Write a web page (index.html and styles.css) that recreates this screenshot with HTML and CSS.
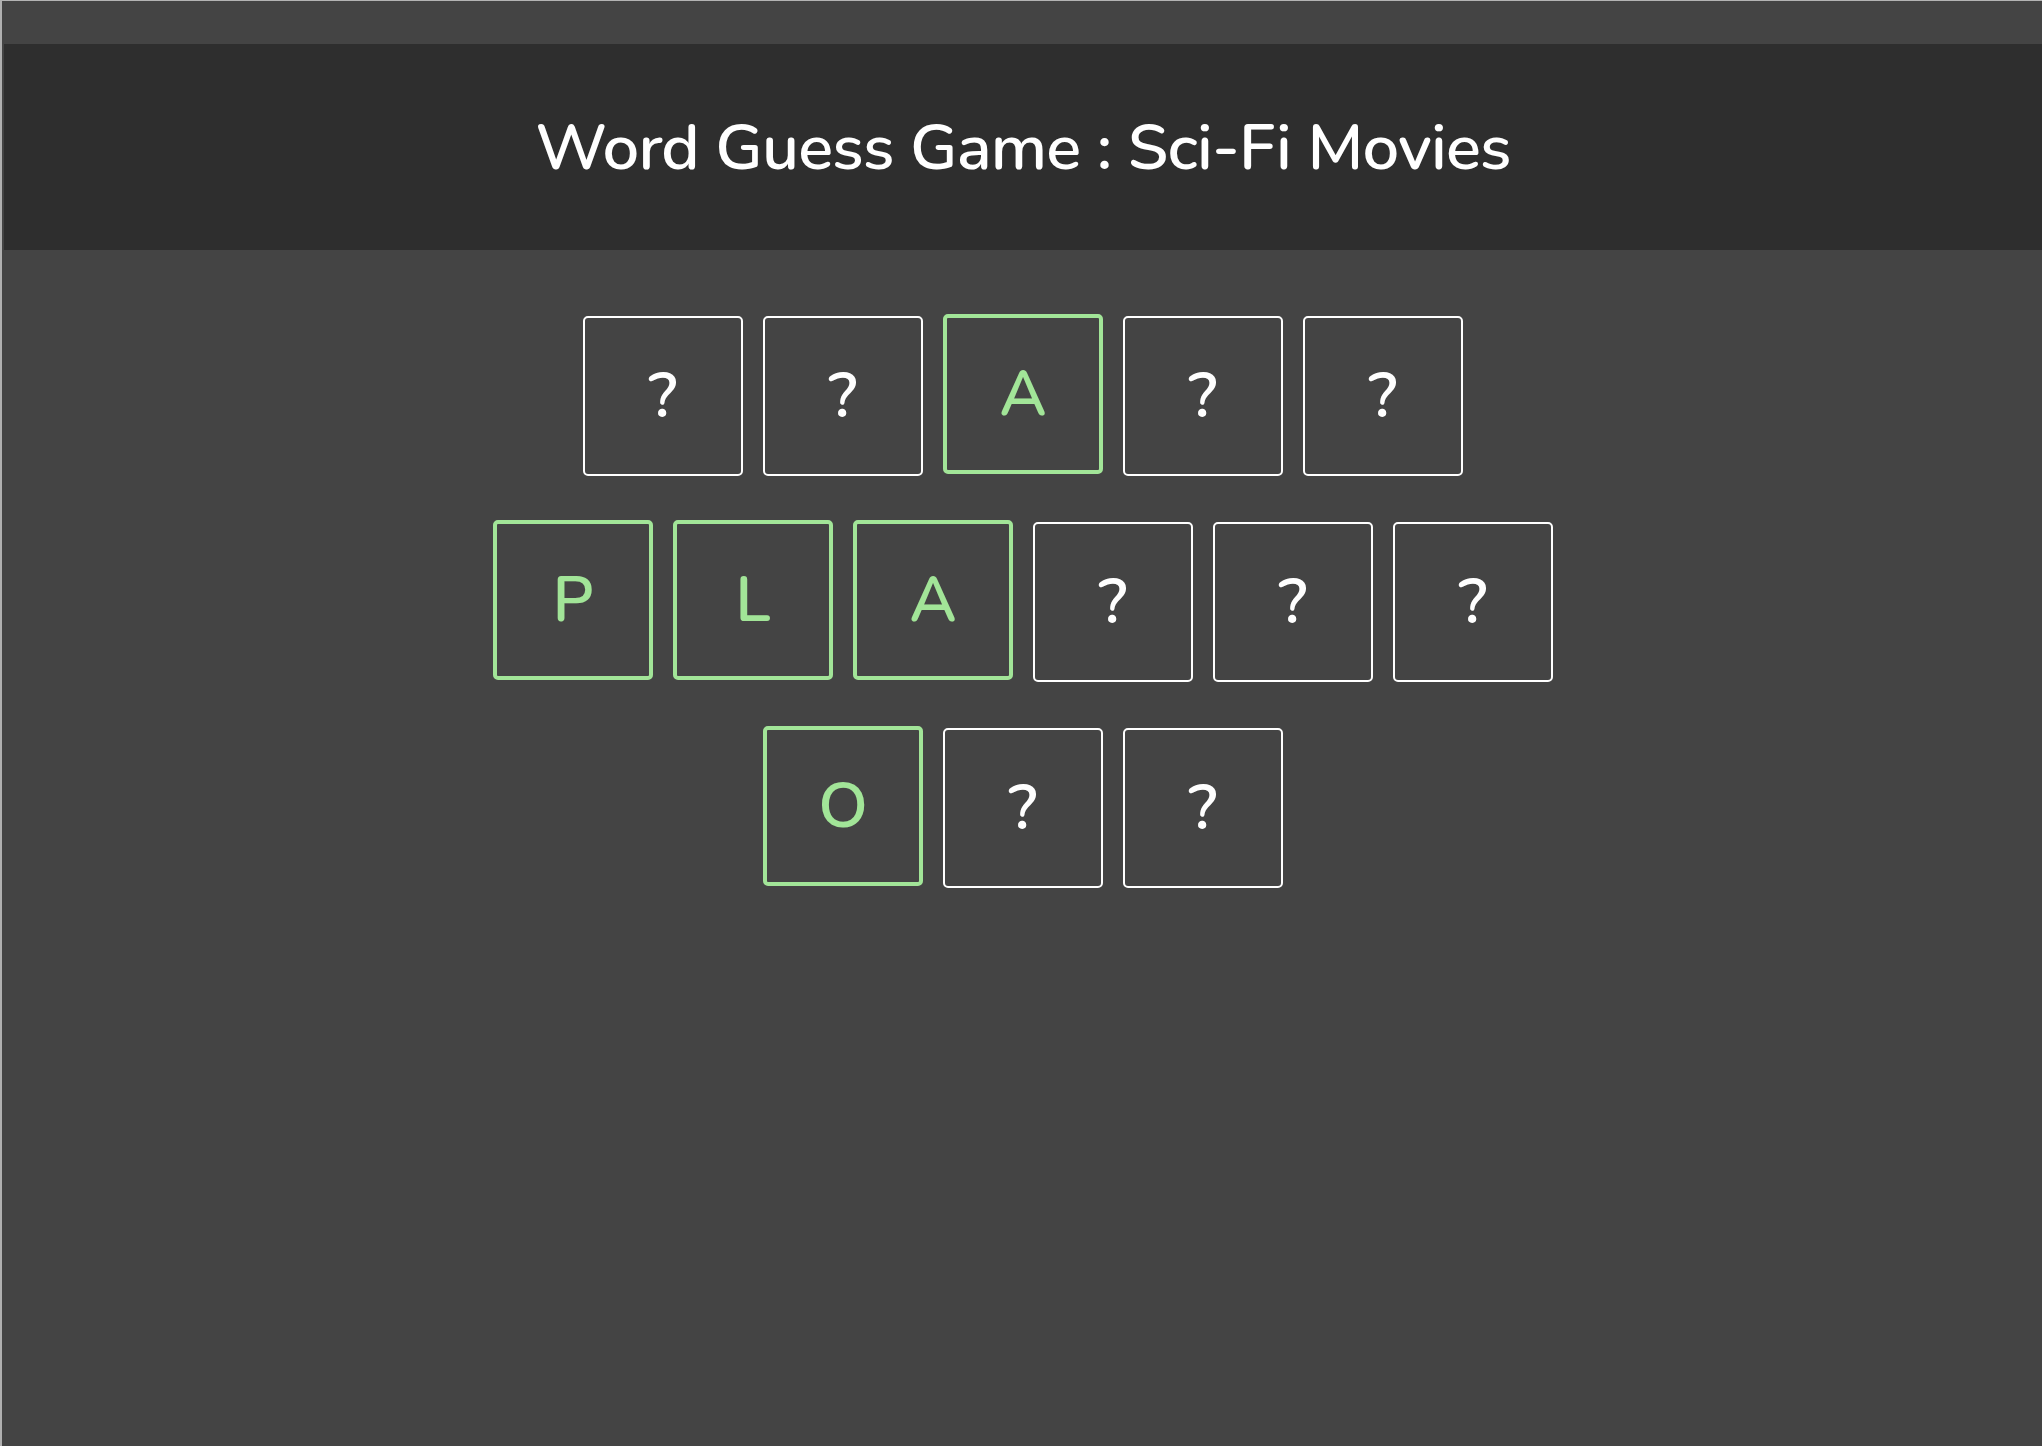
FILE: index.html
```html
<!DOCTYPE html>
<html lang="en">
<head>
<meta charset="utf-8">
<title>Word Guess Game</title>
<link rel="stylesheet" href="styles.css">
</head>
<body>
<div class="window">
  <div class="topband"></div>
  <header class="header">
    <h1 class="title">Word Guess Game : Sci-Fi Movies</h1>
  </header>
  <main class="board">
    <div class="word">
      <div class="tile">?</div>
      <div class="tile">?</div>
      <div class="tile found">A</div>
      <div class="tile">?</div>
      <div class="tile">?</div>
    </div>
    <div class="word">
      <div class="tile found">P</div>
      <div class="tile found">L</div>
      <div class="tile found">A</div>
      <div class="tile">?</div>
      <div class="tile">?</div>
      <div class="tile">?</div>
    </div>
    <div class="word">
      <div class="tile found">O</div>
      <div class="tile">?</div>
      <div class="tile">?</div>
    </div>
  </main>
</div>
</body>
</html>
```

FILE: styles.css
```css
html, body {
  margin: 0;
  padding: 0;
  height: 100%;
  background: #434343;
}

.window {
  box-sizing: border-box;
  min-height: 100%;
  border-top: 1px solid #b4b4b4;
  border-left: 2px solid #b0b0b0;
  background: #444444;
  font-family: "Nunito", "Lato", "Open Sans", sans-serif;
  color: #ffffff;
  padding-left: 2px;
}

.topband {
  height: 43px;
}

.header {
  height: 206px;
  background: #2e2e2e;
  display: flex;
  align-items: center;
  justify-content: center;
}

.title {
  margin: 0;
  font-weight: 600;
  font-size: 65px;
  letter-spacing: -0.8px;
  line-height: 1;
  color: #ffffff;
}

.board {
  display: flex;
  flex-direction: column;
  align-items: center;
  gap: 46px;
  padding-top: 66px;
}

.word {
  display: flex;
  align-items: flex-start;
  gap: 20px;
}

.tile {
  box-sizing: border-box;
  width: 160px;
  height: 160px;
  border: 2px solid #ffffff;
  border-radius: 5px;
  display: flex;
  align-items: center;
  justify-content: center;
  font-size: 64px;
  font-weight: 600;
  line-height: 1;
  color: #ffffff;
}

.tile.found {
  margin-top: -2px;
  border: 4px solid #a2e598;
  color: #a2e598;
}
```
